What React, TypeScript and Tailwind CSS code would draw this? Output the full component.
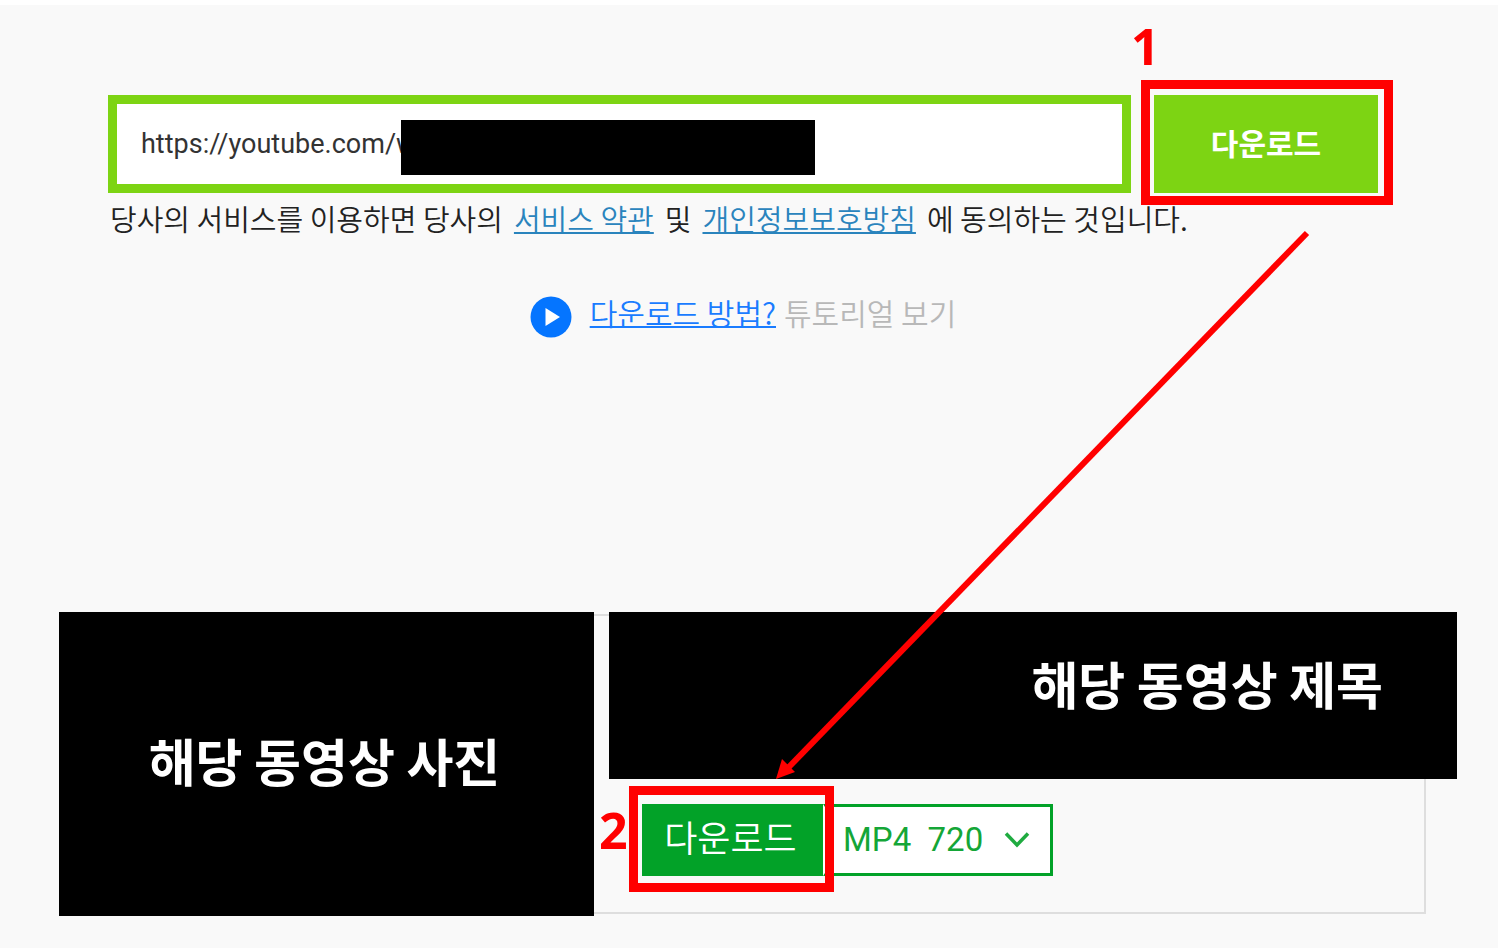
import type { ReactNode } from 'react';

const formats = [
  { value: 'mp4-720', label: 'MP4\u00a0\u00a0720' },
  { value: 'mp4-360', label: 'MP4\u00a0\u00a0360' },
];

function StepNumber({ children, className }: { children: ReactNode; className: string }) {
  return (
    <span
      className={`absolute font-['Open_Sans','Noto_Sans',sans-serif] text-[50px] leading-[50px] font-bold text-[#ff0000] ${className}`}
    >
      {children}
    </span>
  );
}

function PlayIcon() {
  return (
    <svg className="h-[42px] w-[42px] shrink-0" viewBox="0 0 42 42" aria-hidden="true">
      <circle cx="21" cy="21" r="20.5" fill="#0575ff" />
      <path d="M15.5 12v18l14.5-9z" fill="#fff" />
    </svg>
  );
}

function DownloadForm() {
  return (
    <form className="flex gap-[23px]" onSubmit={(e) => e.preventDefault()}>
      <div className="relative flex-1">
        <input
          type="text"
          aria-label="URL"
          defaultValue="https://youtube.com/w"
          className="h-[98px] w-full border-9 border-[#7dd413] bg-white px-6 font-['Roboto',sans-serif] text-[27px] text-[#333] outline-none"
        />
        <div className="absolute top-[25px] left-[293px] h-[55px] w-[414px] bg-black" />
      </div>
      <div className="relative">
        <button type="submit" className="h-[98px] w-[224px] bg-[#7dd413] pb-1 text-[30px] font-bold text-white">
          다운로드
        </button>
        <div className="pointer-events-none absolute -top-[15px] -right-[15px] -bottom-[12px] -left-[13px] border-9 border-[#ff0000]" />
        <StepNumber className="-top-[74px] -left-[23px]">1</StepNumber>
      </div>
    </form>
  );
}

function VideoResult() {
  return (
    <section className="flex pr-[41px] pl-[59px]">
      {/* Thumbnail */}
      <div className="flex h-[304px] w-[535px] shrink-0 items-center justify-center bg-black pr-1 pb-2 text-[51px] font-bold text-white">
        해당 동영상 사진
      </div>

      {/* Title and download options */}
      <div className="my-[2px] mr-[31px] flex-1 border-2 border-l-0 border-[#dedede] pl-[15px]">
        <h2 className="-mt-[4px] -mr-[33px] flex h-[167px] items-center justify-end bg-black pr-[74px] pb-6 text-[51px] font-bold text-white">
          해당 동영상 제목
        </h2>
        <div className="mt-[25px] ml-[33px] flex">
          <div className="relative z-10">
            <button type="button" className="h-[72px] w-[181px] bg-[#02a228] pr-1 pb-2 text-[36px] font-[350] text-white">
              다운로드
            </button>
            <div className="pointer-events-none absolute -top-[18px] -right-[11px] -bottom-[16px] -left-[13px] border-9 border-[#ff0000]" />
            <StepNumber className="top-[1px] -left-[43px]">2</StepNumber>
          </div>
          <div className="relative">
            <select
              aria-label="MP4"
              className="h-[72px] w-[230px] appearance-none border-3 border-l-2 border-[#02a228] border-l-white bg-white pl-[18px] font-['Roboto',sans-serif] text-[33px] text-[#14a637] outline-none"
            >
              {formats.map((format) => (
                <option key={format.value} value={format.value}>
                  {format.label}
                </option>
              ))}
            </select>
            <svg
              className="pointer-events-none absolute top-[27px] right-[23px] h-[18px] w-[26px]"
              viewBox="0 0 26 18"
              fill="none"
              aria-hidden="true"
            >
              <path d="M2 2.5l11 11.5 11-11.5" stroke="#1fab40" strokeWidth="3.5" />
            </svg>
          </div>
        </div>
      </div>
    </section>
  );
}

export default function App() {
  return (
    <main className="relative min-h-screen border-t-5 border-white bg-[#f9f9f9] font-['Noto_Sans_CJK_KR',sans-serif]">
      <div className="pt-[90px] pr-[120px] pl-[108px]">
        <DownloadForm />
        <p className="mt-1 flex flex-wrap gap-x-[11px] pl-0.5 text-[29px] leading-[42px] font-[350] text-[#222]">
          <span>당사의 서비스를 이용하면 당사의</span>
          <a href="#terms" className="text-[#2a84bd] underline decoration-2">
            서비스 약관
          </a>
          <span>및</span>
          <a href="#privacy" className="text-[#2a84bd] underline decoration-2">
            개인정보보호방침
          </a>
          <span>에 동의하는 것입니다.</span>
        </p>
      </div>

      <div className="mt-[57px] mb-[274px] flex items-start justify-center pr-3 text-[30px] leading-[32px] font-[350]">
        <PlayIcon />
        <a href="#tutorial" className="ml-[18px] text-[#1a7cff] underline decoration-2">
          다운로드 방법?
        </a>
        <span className="ml-2 text-[#b8b8b8]">튜토리얼 보기</span>
      </div>

      <VideoResult />

      {/* Arrow from step 1 to step 2 */}
      <svg
        className="pointer-events-none absolute top-[225px] left-[776px] z-20 h-[550px] w-[534px]"
        viewBox="0 0 534 550"
        aria-hidden="true"
      >
        <path d="M531 3L11 539" stroke="#ff0000" strokeWidth="6" />
        <path d="M0 549l6-20 13 13z" fill="#ff0000" />
      </svg>
    </main>
  );
}
